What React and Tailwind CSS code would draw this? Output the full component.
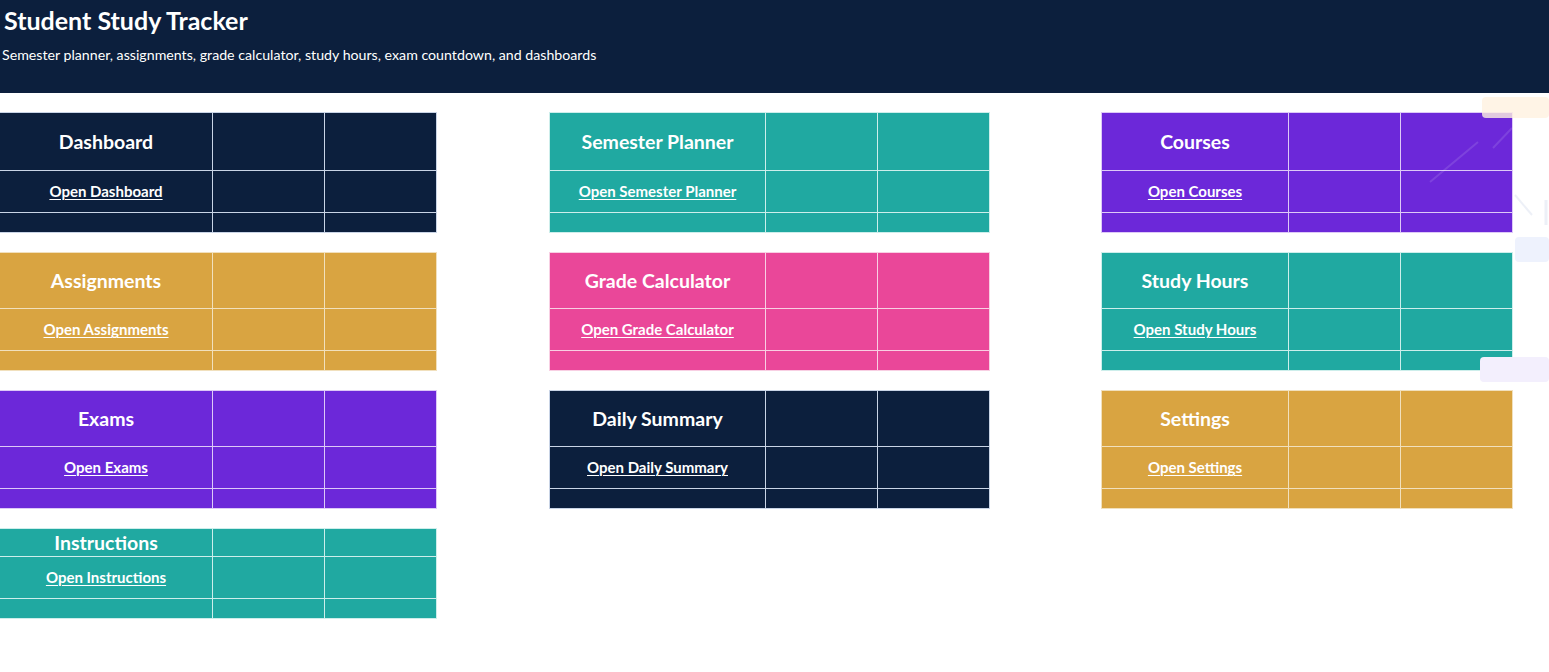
import React from "react";

const cards = [
  [
    { title: "Dashboard", link: "Open Dashboard", bg: "bg-[#0c1f3d]", line: "bg-[#c9d4e6]", r1: "grid-rows-[57px_41px_19px]" },
    { title: "Assignments", link: "Open Assignments", bg: "bg-[#d9a441]", line: "bg-[#f1e0bd]", r1: "grid-rows-[55px_41px_19px]" },
    { title: "Exams", link: "Open Exams", bg: "bg-[#6c28d9]", line: "bg-[#ddc9f7]", r1: "grid-rows-[55px_41px_19px]" },
    { title: "Instructions", link: "Open Instructions", bg: "bg-[#20a9a1]", line: "bg-[#cdeeeb]", r1: "grid-rows-[27px_41px_19px]" },
  ],
  [
    { title: "Semester Planner", link: "Open Semester Planner", bg: "bg-[#20a9a1]", line: "bg-[#cdeeeb]", r1: "grid-rows-[57px_41px_19px]" },
    { title: "Grade Calculator", link: "Open Grade Calculator", bg: "bg-[#ea4799]", line: "bg-[#f8cfe3]", r1: "grid-rows-[55px_41px_19px]" },
    { title: "Daily Summary", link: "Open Daily Summary", bg: "bg-[#0c1f3d]", line: "bg-[#c9d4e6]", r1: "grid-rows-[55px_41px_19px]" },
  ],
  [
    { title: "Courses", link: "Open Courses", bg: "bg-[#6c28d9]", line: "bg-[#ddc9f7]", r1: "grid-rows-[57px_41px_19px]" },
    { title: "Study Hours", link: "Open Study Hours", bg: "bg-[#20a9a1]", line: "bg-[#cdeeeb]", r1: "grid-rows-[55px_41px_19px]" },
    { title: "Settings", link: "Open Settings", bg: "bg-[#d9a441]", line: "bg-[#f1e0bd]", r1: "grid-rows-[55px_41px_19px]" },
  ],
];

const colTemplates = [
  "grid-cols-[212px_111px_111px]",
  "grid-cols-[215px_111px_111px]",
  "grid-cols-[186px_111px_111px]",
];

function Card({ c, cols }) {
  const cell = `${c.bg}`;
  return (
    <div className={`grid ${cols} ${c.r1} gap-px p-px ${c.line}`}>
      <div className={`${cell} flex items-center justify-center`}>
        <span className="text-[19.5px] font-bold text-white leading-none">{c.title}</span>
      </div>
      <div className={cell} />
      <div className={cell} />
      <div className={`${cell} flex items-center justify-center`}>
        <span className="text-[15px] font-bold text-white underline underline-offset-2 decoration-1 leading-none">
          {c.link}
        </span>
      </div>
      <div className={cell} />
      <div className={cell} />
      <div className={cell} />
      <div className={cell} />
      <div className={cell} />
    </div>
  );
}

export default function App() {
  return (
    <div className="relative w-[1549px] h-[672px] overflow-hidden bg-white font-['Lato',_'Open_Sans',_sans-serif]">
      <div className="h-[93px] bg-[#0c1f3d] text-white">
        <div className="pl-[4px] pt-[5px] text-[25px] font-bold leading-[30px]">Student Study Tracker</div>
        <div className="pl-[2px] pt-[11px] text-[14.2px] leading-[18px]">
          Semester planner, assignments, grade calculator, study hours, exam countdown, and dashboards
        </div>
      </div>

      <div className="flex items-start pt-[19px]">
        <div className="ml-[-1px] w-[438px] flex flex-col gap-[19px]">
          {cards[0].map((c) => (
            <Card key={c.title} c={c} cols={colTemplates[0]} />
          ))}
        </div>
        <div className="ml-[112px] w-[441px] flex flex-col gap-[19px]">
          {cards[1].map((c) => (
            <Card key={c.title} c={c} cols={colTemplates[1]} />
          ))}
        </div>
        <div className="ml-[111px] w-[412px] flex flex-col gap-[19px]">
          {cards[2].map((c) => (
            <Card key={c.title} c={c} cols={colTemplates[2]} />
          ))}
        </div>
      </div>

      {/* faint decorative shapes on the right edge */}
      <div className="absolute left-[1482px] top-[97px] w-[67px] h-[21px] rounded-sm bg-[#fff1e0] opacity-80" />
      <div className="absolute left-[1515px] top-[237px] w-[34px] h-[25px] rounded-sm bg-[#eef2fd]" />
      <div className="absolute left-[1480px] top-[357px] w-[69px] h-[25px] rounded-sm bg-[#f3effd]" />
      <svg className="absolute left-[1420px] top-[120px] pointer-events-none" width="129" height="110" viewBox="0 0 129 110">
        <line x1="10" y1="62" x2="58" y2="22" stroke="#ffffff" strokeOpacity="0.12" strokeWidth="2" />
        <line x1="73" y1="28" x2="92" y2="8" stroke="#ffffff" strokeOpacity="0.12" strokeWidth="2" />
        <line x1="95" y1="75" x2="112" y2="95" stroke="#e8ecf5" strokeOpacity="0.8" strokeWidth="2" />
        <line x1="126" y1="80" x2="126" y2="105" stroke="#e8ecf5" strokeOpacity="0.8" strokeWidth="3" />
      </svg>
    </div>
  );
}
